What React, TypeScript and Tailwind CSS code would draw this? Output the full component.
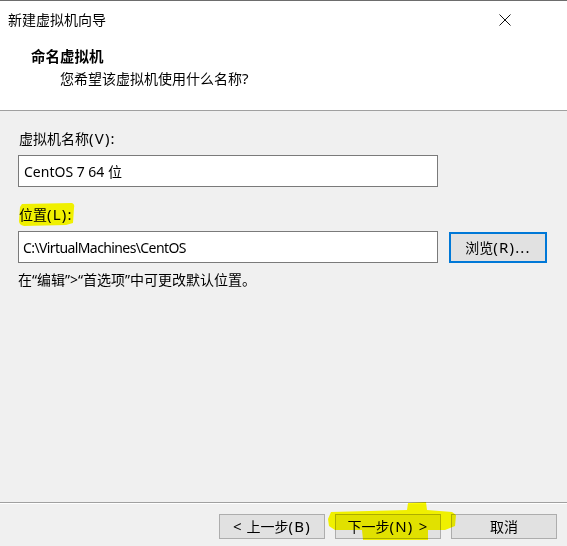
import React from "react";

const font = {
  fontFamily: "'Noto Sans', 'Noto Sans CJK SC', sans-serif",
};

function L({ children }: { children: React.ReactNode }) {
  return <span className="text-[15px] leading-none tracking-[1.2px]">{children}</span>;
}

function Btn({ children, className = "" }: { children: React.ReactNode; className?: string }) {
  return (
    <div
      className={
        "w-[106px] h-[25px] flex items-center justify-center bg-[#e1e1e1] border border-[#adadad] text-[14px] leading-none text-black " +
        className
      }
    >
      {children}
    </div>
  );
}

export default function App() {
  return (
    <div
      className="relative w-[567px] h-[546px] flex flex-col bg-[#f0f0f0] text-black overflow-hidden"
      style={font}
    >
      {/* header */}
      <div className="bg-white border-t border-t-[#6d6d6d] border-b border-b-[#a0a0a0] h-[111px] flex flex-col">
        <div className="h-[38px] flex items-center justify-between pl-[8px] pr-[56px]">
          <span className="text-[14px] leading-[20px]">新建虚拟机向导</span>
          <svg width="12" height="12" viewBox="0 0 12 12" className="block">
            <path d="M0.5 0.5 L11.5 11.5 M11.5 0.5 L0.5 11.5" stroke="#111" strokeWidth="1" fill="none" />
          </svg>
        </div>
        <div className="mt-[7px] h-[20px] pl-[31px] text-[14.5px] leading-[20px] font-bold">命名虚拟机</div>
        <div className="mt-[3px] h-[20px] pl-[60px] text-[14px] leading-[20px]">
          您希望该虚拟机使用什么名称<L>?</L>
        </div>
      </div>

      {/* body */}
      <div className="flex-1 flex flex-col pl-[18px]">
        <div className="mt-[18px] h-[20px] text-[14px] leading-[20px] pl-[1px]">
          虚拟机名称<L>(V):</L>
        </div>
        <div className="mt-[6px] w-[420px] h-[32px] bg-white border border-[#7a7a7a] flex items-center pl-[5px] text-[14px]">
          CentOS 7 64 位
        </div>
        <div className="mt-[18px] h-[20px] text-[14px] leading-[20px] pl-[1px]">
          位置<L>(L):</L>
        </div>
        <div className="mt-[6px] flex items-center gap-[11px]">
          <div className="w-[420px] h-[32px] bg-white border border-[#7a7a7a] flex items-center pl-[4px] text-[14px] tracking-[-0.6px]">
            C:\VirtualMachines\CentOS
          </div>
          <div className="w-[98px] h-[31px] flex items-center justify-center bg-[#e1e1e1] border-2 border-[#0078d7] text-[14px]">
            浏览<L>(R)...</L>
          </div>
        </div>
        <div className="mt-[7px] h-[20px] text-[14px] leading-[20px]">在“编辑”&gt;“首选项”中可更改默认位置。</div>
      </div>

      {/* footer */}
      <div className="h-[44px] border-t border-t-[#a0a0a0] flex flex-col">
        <div className="h-px bg-white" />
        <div className="mt-[10px] flex justify-end gap-[10px] pr-[10px]">
          <Btn>
            <L>&lt;</L>&nbsp;上一步<L>(B)</L>
          </Btn>
          <Btn>
            下一步<L>(N) &gt;</L>
          </Btn>
          <Btn>取消</Btn>
        </div>
      </div>

      {/* highlighter marks */}
      <svg
        className="absolute inset-0 pointer-events-none mix-blend-multiply"
        width="567"
        height="546"
        viewBox="0 0 567 546"
      >
        <path
          d="M22 204 L72 203 Q75 204 74 208 L73 223 L66 225 L24 226 Q19 225 19 221 L20 207 Z"
          fill="#ffff00"
        />
        <path
          d="M328 519 L331 512 L407 510 L408 503 L426 502 L427 510 L452 512 L456 515 L455 526 L445 530 L428 530 L428 540 L363 540 L362 530 L335 530 L329 526 Z"
          fill="#ffff00"
        />
      </svg>
    </div>
  );
}
